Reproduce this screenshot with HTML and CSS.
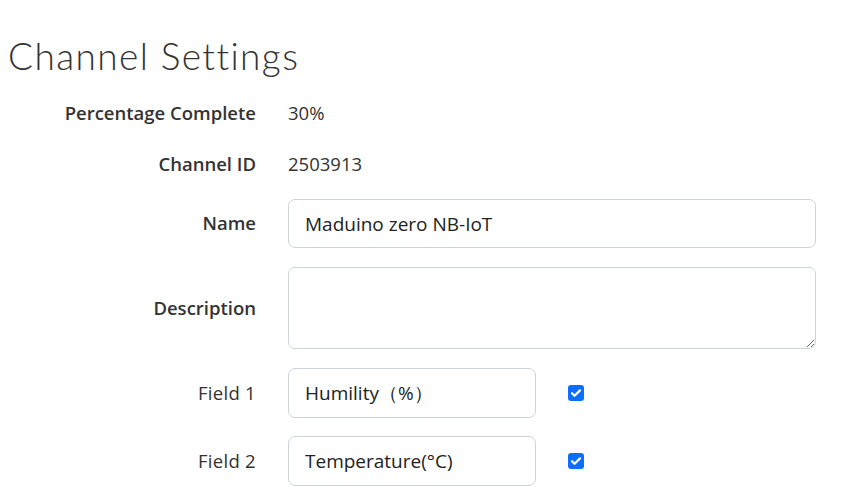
FILE: index.html
```html
<!DOCTYPE html>
<html lang="en">
  <head>
    <meta charset="UTF-8" />
    <title>Channel Settings</title>
    <link rel="stylesheet" href="styles.css">
  </head>
  <body>
    <h1 class="page-title">Channel Settings</h1>
    <form class="settings">
      <div class="row row-static row-first">
        <label class="label strong">Percentage Complete</label>
        <div class="value">30%</div>
      </div>
      <div class="row row-static">
        <label class="label strong">Channel ID</label>
        <div class="value">2503913</div>
      </div>
      <div class="row">
        <label class="label strong" for="name">Name</label>
        <input class="control" id="name" type="text" value="Maduino zero NB-IoT" />
      </div>
      <div class="row">
        <label class="label strong" for="desc">Description</label>
        <textarea class="control area" id="desc"></textarea>
      </div>
      <div class="row">
        <label class="label field-label" for="f1">Field 1</label>
        <div class="field-line">
          <input class="control short" id="f1" type="text" value="Humility（%）" />
          <span class="check"><svg viewBox="0 0 16 16" width="16" height="16"><path d="M4 8.2l2.6 2.6L12 5.4" fill="none" stroke="#fff" stroke-width="2.2" stroke-linecap="round" stroke-linejoin="round"/></svg></span>
        </div>
      </div>
      <div class="row row-last">
        <label class="label field-label" for="f2">Field 2</label>
        <div class="field-line">
          <input class="control short" id="f2" type="text" value="Temperature(°C)" />
          <span class="check"><svg viewBox="0 0 16 16" width="16" height="16"><path d="M4 8.2l2.6 2.6L12 5.4" fill="none" stroke="#fff" stroke-width="2.2" stroke-linecap="round" stroke-linejoin="round"/></svg></span>
        </div>
      </div>
    </form>
  </body>
</html>
```

FILE: styles.css
```css
* {
  box-sizing: border-box;
}
body {
  margin: 0;
  padding: 0 8px;
  background: #fff;
  color: #333;
  font-family: "Open Sans", sans-serif;
}
.page-title {
  margin: 0;
  padding-top: 34px;
  height: 90px;
  font-family: "Lato", sans-serif;
  font-weight: 300;
  font-size: 37px;
  line-height: 44px;
  color: #333;
  letter-spacing: 1.4px;
}
.settings {
  display: flex;
  flex-direction: column;
}
.row {
  display: grid;
  grid-template-columns: 248px 528px;
  column-gap: 32px;
  align-items: center;
  margin-bottom: 19px;
}
.row-first {
  margin-top: 5px;
}
.row-static {
  height: 36px;
  margin-bottom: 15px;
}
.row-static + .row-static {
  margin-bottom: 17px;
}
.row + .row-last {
  margin-top: -1px;
}
.label {
  text-align: right;
  font-size: 18.5px;
  color: #333;
  padding-bottom: 2px;
}
.label.strong {
  font-weight: 600;
}
.field-label {
  letter-spacing: 0.3px;
}
.value {
  font-size: 18.5px;
  color: #333;
  padding-bottom: 2px;
}
.control {
  display: block;
  width: 528px;
  height: 49px;
  padding: 0 16px;
  border: 1px solid #ced4da;
  border-radius: 7px;
  font-family: "Open Sans", sans-serif;
  font-size: 19px;
  color: #222;
  background: #fff;
  outline: none;
}
.area {
  height: 82px;
  resize: vertical;
}
.short {
  width: 248px;
  height: 50px;
}
.field-line {
  display: flex;
  align-items: center;
  gap: 32px;
}
.check {
  width: 16px;
  height: 16px;
  border-radius: 3px;
  background: #0d6efd;
  display: flex;
}
```
